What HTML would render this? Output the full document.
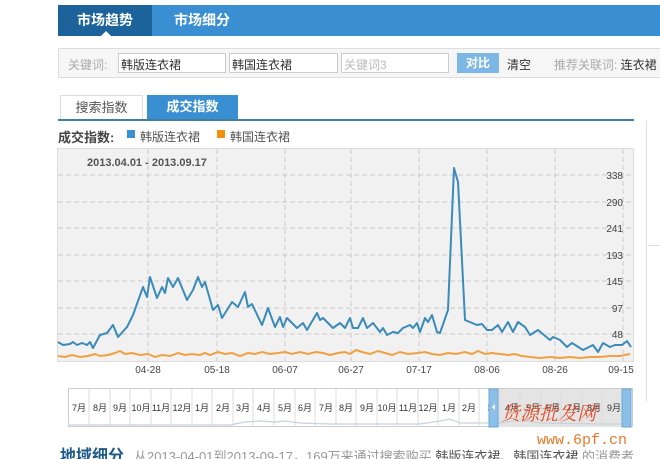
<!DOCTYPE html>
<html><head><meta charset="utf-8"><style>
*{margin:0;padding:0;box-sizing:border-box}
body{width:660px;height:459px;overflow:hidden;background:#fff;font-family:"Liberation Sans","Noto Sans CJK SC",sans-serif;font-size:12px;color:#333;position:relative}
.a{position:absolute}
</style></head><body>
<div class="a" style="left:58px;top:5px;width:602px;height:31px;background:#3a8fd3"></div>
<div class="a" style="left:58px;top:5px;width:94px;height:31px;background:#1d639b;color:#fff;font-size:14px;font-weight:bold;line-height:31px;text-align:center">市场趋势</div>
<div class="a" style="left:101px;top:31px;width:0;height:0;border:5px solid transparent;border-bottom-color:#fff;border-top:0"></div>
<div class="a" style="left:152px;top:5px;width:100px;height:31px;color:#fff;font-size:14px;font-weight:bold;line-height:31px;text-align:center">市场细分</div>

<div class="a" style="left:58px;top:48px;width:604px;height:30px;background:#f6f6f6;border:1px solid #ddd"></div>
<div class="a" style="left:68px;top:56px;color:#aaa">关键词:</div>
<div class="a" style="left:118px;top:53px;width:108px;height:20px;border:1px solid #ccc;background:#fff;padding:2px 0 0 2px">韩版连衣裙</div>
<div class="a" style="left:229px;top:53px;width:109px;height:20px;border:1px solid #ccc;background:#fff;padding:2px 0 0 2px">韩国连衣裙</div>
<div class="a" style="left:341px;top:53px;width:108px;height:20px;border:1px solid #ccc;background:#fff;padding:2px 0 0 2px;color:#bbb">关键词3</div>
<div class="a" style="left:457px;top:53px;width:42px;height:20px;background:#7db7e6;color:#fff;font-weight:bold;text-align:center;line-height:20px">对比</div>
<div class="a" style="left:507px;top:56px">清空</div>
<div class="a" style="left:554px;top:56px;color:#aaa">推荐关联词: <span style="color:#333">连衣裙</span></div>

<div class="a" style="left:60px;top:95px;width:83px;height:25px;border:1px solid #ddd;border-bottom:0;text-align:center;line-height:24px;font-size:13px;color:#555">搜索指数</div>
<div class="a" style="left:147px;top:95px;width:91px;height:25px;background:#3a8fd3;text-align:center;line-height:24px;font-size:13px;color:#fff;font-weight:bold">成交指数</div>
<div class="a" style="left:58px;top:119px;width:576px;height:2px;background:#3f7fa0"></div>
<div class="a" style="left:646px;top:121px;width:1px;height:280px;background:#ddd"></div>
<div class="a" style="left:648px;top:245px;width:12px;height:1px;background:#ddd"></div>

<div class="a" style="left:58px;top:127px;font-size:13px;font-weight:bold;color:#444">成交指数:</div>
<div class="a" style="left:127px;top:130px;width:8px;height:8px;background:#3a8fd3"></div>
<div class="a" style="left:140px;top:128px;color:#555">韩版连衣裙</div>
<div class="a" style="left:217px;top:130px;width:8px;height:8px;background:#f0900c"></div>
<div class="a" style="left:230px;top:128px;color:#555">韩国连衣裙</div>

<svg class="a" style="left:0;top:0" width="660" height="459">
<rect x="57.5" y="148.5" width="576" height="213" fill="#f1f1f1" stroke="#ddd"/>
<g stroke="#ccc" stroke-dasharray="5,3" fill="none">
<path d="M58 175H633M58 202H633M58 228H633M58 255H633M58 281H633M58 308H633M58 334H633"/>
<path d="M148 149V361M217 149V361M285 149V361M351 149V361M419 149V361M487 149V361M555 149V361M623 149V361"/>
</g>
<g font-size="10" fill="#444" font-family="Liberation Sans,sans-serif" text-anchor="end">
<text x="623" y="179">338</text><text x="623" y="206">290</text><text x="623" y="232">241</text><text x="623" y="259">193</text><text x="623" y="285">145</text><text x="623" y="312">97</text><text x="623" y="338">48</text>
</g>
<g font-size="10" fill="#444" font-family="Liberation Sans,sans-serif" text-anchor="middle">
<text x="148" y="373">04-28</text><text x="217" y="373">05-18</text><text x="285" y="373">06-07</text><text x="351" y="373">06-27</text><text x="419" y="373">07-17</text><text x="487" y="373">08-06</text><text x="555" y="373">08-26</text><text x="621" y="373">09-15</text>
</g>
<text x="87" y="166" font-size="11" font-weight="bold" fill="#555" font-family="Liberation Sans,sans-serif">2013.04.01 - 2013.09.17</text>
<polyline fill="none" stroke="#f0a040" stroke-width="2" points="58,356 65,357 72,355 80,357 88,356 95,354 100,356 108,355 115,353 120,351 125,354 132,353 140,355 148,354 155,357 162,355 170,356 178,353 185,355 192,354 200,355 205,353 210,355 218,352 225,354 232,353 240,356 248,353 255,354 262,352 270,354 278,353 285,352 292,354 300,352 308,354 316,352 323,353 330,355 338,353 345,352 350,354 356,350 362,352 370,354 378,351 385,353 392,355 400,352 408,354 418,353 425,352 432,354 440,355 448,353 456,354 465,352 472,354 478,351 485,354 492,353 500,354 508,355 515,354 522,356 530,357 540,358 550,357 560,358 570,357 580,358 590,357 600,357 610,356 620,356 630,354"/>
<polyline fill="none" stroke="#3b8bba" stroke-width="2" stroke-linejoin="round" points="58,342 63,345 70,344 73,342 77,345 82,343 87,345 90,342 93,348 100,335 107,333 113,325 118,337 127,327 133,315 143,287 147,297 150,277 157,298 162,287 165,293 168,278 173,287 178,278 187,300 193,290 198,277 202,287 205,282 213,310 218,305 222,318 232,302 238,307 245,292 248,307 252,304 262,325 268,308 275,327 280,317 283,327 287,318 297,328 303,323 307,330 317,313 320,320 323,318 333,328 340,323 345,328 350,318 353,328 358,328 363,318 367,328 373,323 380,332 383,328 387,335 393,332 398,333 403,328 410,325 413,328 417,323 420,332 425,318 428,322 432,315 437,332 440,333 448,310 454,168 458,182 465,320 477,325 482,324 487,330 492,330 498,325 502,332 508,322 513,332 518,322 525,327 530,335 538,330 550,340 553,337 560,340 567,347 572,343 583,350 593,345 598,352 603,343 610,347 615,345 622,345 627,341 631,347"/>

<rect x="68.5" y="388.5" width="564" height="38" fill="#fff" stroke="#ccc"/>
<rect x="489" y="389" width="140" height="38" fill="#e4e4e4"/>
<g stroke="#ddd">
<path d="M89 389V427M110 389V427M130 389V427M151 389V427M171 389V427M192 389V427M212 389V427M233 389V427M253 389V427M274 389V427M295 389V427M315 389V427M336 389V427M356 389V427M377 389V427M397 389V427M418 389V427M438 389V427M459 389V427M479 389V427M500 389V427M520 389V427M541 389V427M561 389V427M582 389V427M602 389V427"/>
</g>
<polyline fill="none" stroke="#c5d3dc" stroke-width="1.2" points="69,425 230,425 245,422 260,421 275,422 285,421 300,423 330,424 420,424 440,421 450,419 460,423 500,423 520,420 540,423 600,424 632,424"/>
<g font-size="9" fill="#333" font-family="Liberation Sans,Noto Sans CJK SC,sans-serif" text-anchor="middle">
<text x="79" y="411">7月</text><text x="100" y="411">8月</text><text x="120" y="411">9月</text><text x="141" y="411">10月</text><text x="161" y="411">11月</text><text x="182" y="411">12月</text><text x="202" y="411">1月</text><text x="223" y="411">2月</text><text x="243" y="411">3月</text><text x="264" y="411">4月</text><text x="285" y="411">5月</text><text x="305" y="411">6月</text><text x="326" y="411">7月</text><text x="346" y="411">8月</text><text x="367" y="411">9月</text><text x="387" y="411">10月</text><text x="408" y="411">11月</text><text x="428" y="411">12月</text><text x="449" y="411">1月</text><text x="469" y="411">2月</text><text x="490" y="411">3</text><text x="512" y="411">4月</text><text x="533" y="411">5月</text><text x="553" y="411">6月</text><text x="574" y="411">7月</text><text x="594" y="411">8月</text><text x="614" y="411">9月</text>
</g>
<rect x="489" y="389" width="9" height="38" fill="#8dc0e8" stroke="#6aa6d6"/>
<rect x="622" y="389" width="9" height="38" fill="#8dc0e8" stroke="#6aa6d6"/>
<path d="M495 404l-3 3 3 3z" fill="#fff"/>
<text x="501" y="420" font-size="19" fill="#e8502a" font-family="Noto Serif CJK SC,serif" font-style="italic">货源批发网</text>
<text x="537" y="444" font-size="15" fill="#e87a2a" font-family="Liberation Mono,monospace">www.6pf.cn</text>
<text x="60" y="461" font-size="16" font-weight="bold" fill="#1d5a8a" font-family="Noto Sans CJK SC,sans-serif">地域细分</text>
<text x="134" y="461" font-size="13" fill="#999" font-family="Liberation Sans,Noto Sans CJK SC,sans-serif">从2013-04-01到2013-09-17，169万来通过搜索购买 <tspan fill="#555">韩版连衣裙</tspan>、<tspan fill="#555">韩国连衣裙</tspan> 的消费者</text>
</svg>
</body></html>
